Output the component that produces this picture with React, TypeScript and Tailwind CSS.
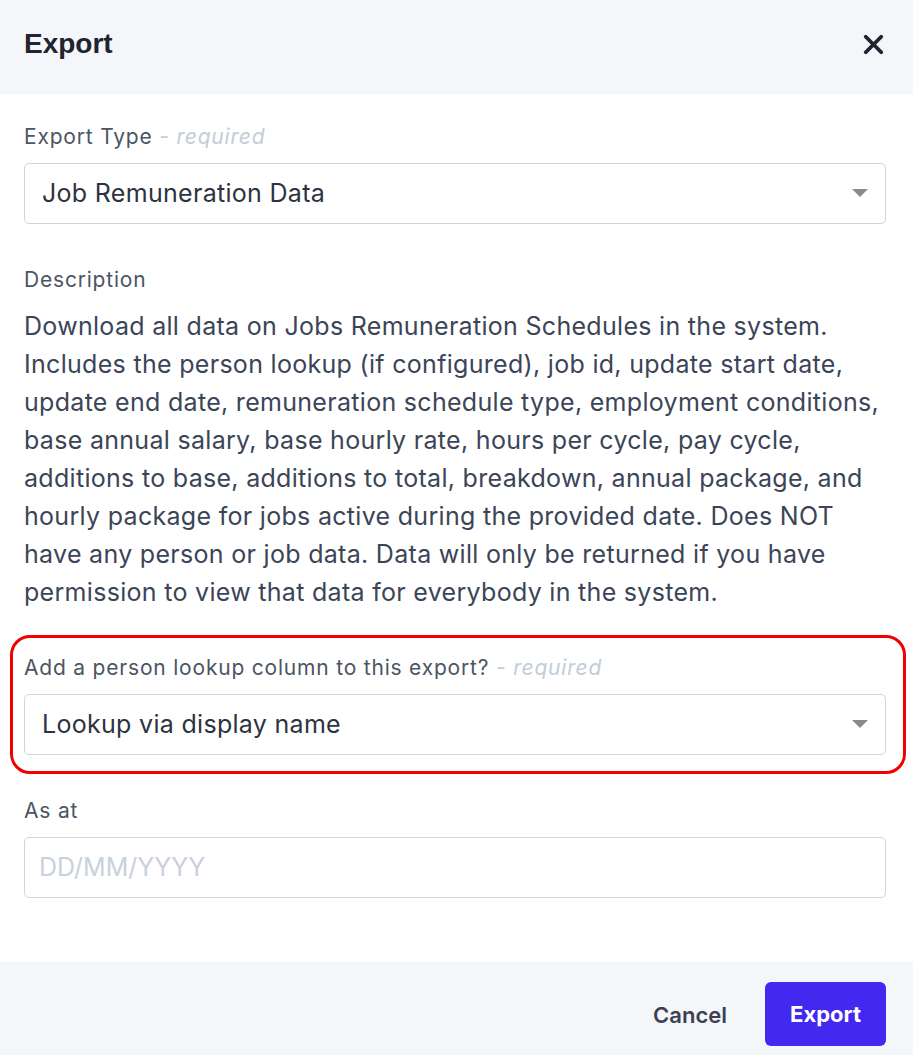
import { X } from "lucide-react";

const Caret = () => (
  <svg width="16" height="9" viewBox="0 0 16 9" className="shrink-0">
    <path d="M0 0 L16 0 L8 8 Z" fill="#8a8a8a" />
  </svg>
);

const Label = ({ text, required }: { text: string; required?: boolean }) => (
  <p className="text-[21px] leading-[28px] tracking-[0.8px] text-[#4b5563]">
    {text}
    {required && <span className="italic text-[#c3ccd8]"> - required</span>}
  </p>
);

const Select = ({ value }: { value: string }) => (
  <div className="mt-[12px] flex h-[61px] items-center justify-between rounded-[5px] border border-[#cfd5dd] bg-white pl-[17px] pr-[17px]">
    <span className="text-[25px] tracking-[0.3px] text-[#2d3340]">{value}</span>
    <Caret />
  </div>
);

const App = () => {
  return (
    <div className="flex h-[1055px] w-[913px] flex-col bg-white font-['Inter',sans-serif]">
      <div className="flex h-[94px] items-center justify-between bg-[#f5f6fa] pb-[6px] pl-[24px] pr-[24px]">
        <h1 className="font-['Liberation_Sans',sans-serif] text-[28px] font-bold text-[#1f2430]">Export</h1>
        <X size={31} strokeWidth={3} className="text-[#1f2430]" />
      </div>

      <div className="flex flex-1 flex-col pl-[24px] pr-[27px] pt-[29px]">
        <div>
          <Label text="Export Type" required />
          <Select value="Job Remuneration Data" />
        </div>

        <div className="mt-[42px]">
          <Label text="Description" />
          <p className="mt-[13px] text-[25px] leading-[38px] tracking-[0.3px] text-[#3b4557]">
            Download all data on Jobs Remuneration Schedules in the system. Includes the person lookup (if configured), job id, update start date, update end date, remuneration schedule type, employment conditions, base annual salary, base hourly rate, hours per cycle, pay cycle, additions to base, additions to total, breakdown, annual package, and hourly package for jobs active during the provided date. Does NOT have any person or job data. Data will only be returned if you have permission to view that data for everybody in the system.
          </p>
        </div>

        <div className="-ml-[14px] -mr-[20px] mt-[24px] rounded-[20px] border-[3px] border-[#f00000] pb-[16px] pl-[11px] pr-[17px] pt-[16px]">
          <Label text="Add a person lookup column to this export?" required />
          <Select value="Lookup via display name" />
        </div>

        <div className="mt-[23px]">
          <Label text="As at" />
          <div className="mt-[12px] flex h-[61px] items-center rounded-[5px] border border-[#cfd5dd] bg-white px-[14px]">
            <span className="text-[25px] text-[#c8d1dc]">DD/MM/YYYY</span>
          </div>
        </div>
      </div>

      <div className="flex h-[93px] items-start justify-end gap-[38px] bg-[#f5f6fa] pr-[27px] pt-[20px]">
        <span className="mt-[17px] text-[22px] font-semibold text-[#3a4252]">Cancel</span>
        <button className="h-[64px] w-[121px] rounded-[6px] bg-[#4329f0] text-[22px] font-bold text-white">Export</button>
      </div>
    </div>
  );
};

export default App;
